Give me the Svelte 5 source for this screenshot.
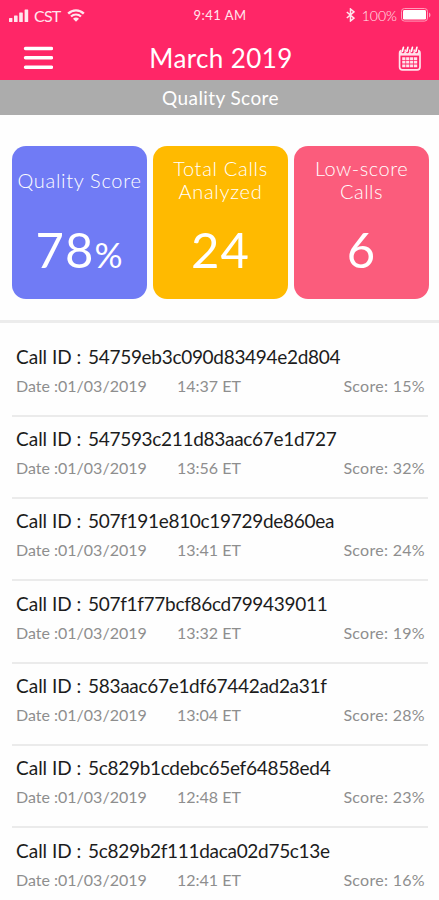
<script lang="ts">
	const month = 'March 2019';

	const cards = [
		{ label: 'Quality Score', value: '78', unit: '%', tone: 'blue' },
		{ label: 'Total Calls Analyzed', value: '24', unit: '', tone: 'amber' },
		{ label: 'Low-score Calls', value: '6', unit: '', tone: 'rose' }
	];

	const calls = [
		{ id: '54759eb3c090d83494e2d804', date: '01/03/2019', time: '14:37 ET', score: 15 },
		{ id: '547593c211d83aac67e1d727', date: '01/03/2019', time: '13:56 ET', score: 32 },
		{ id: '507f191e810c19729de860ea', date: '01/03/2019', time: '13:41 ET', score: 24 },
		{ id: '507f1f77bcf86cd799439011', date: '01/03/2019', time: '13:32 ET', score: 19 },
		{ id: '583aac67e1df67442ad2a31f', date: '01/03/2019', time: '13:04 ET', score: 28 },
		{ id: '5c829b1cdebc65ef64858ed4', date: '01/03/2019', time: '12:48 ET', score: 23 },
		{ id: '5c829b2f111daca02d75c13e', date: '01/03/2019', time: '12:41 ET', score: 16 }
	];
</script>

<div class="screen">
	<header class="header">
		<div class="status">
			<div class="status__left">
				<svg class="signal" width="20" height="13" viewBox="0 0 20 13" fill="currentColor">
					<rect x="0" y="9" width="3.4" height="4" rx="0.6" />
					<rect x="5" y="6.5" width="3.6" height="6.5" rx="0.6" />
					<rect x="10.2" y="3.5" width="3.6" height="9.5" rx="0.6" />
					<rect x="15.6" y="0.5" width="3.6" height="12.5" rx="0.6" />
				</svg>
				<span class="status__carrier">CST</span>
				<svg width="18" height="13" viewBox="0 0 18 13" fill="none" stroke="currentColor">
					<path d="M1.2 4.6a11 11 0 0 1 15.6 0" stroke-width="2.4" />
					<path d="M4 7.6a7 7 0 0 1 10 0" stroke-width="2.2" />
					<path d="M9 12.8 6 9.8a4.2 4.2 0 0 1 6 0z" fill="currentColor" stroke="none" />
				</svg>
			</div>
			<span class="status__time">9:41 AM</span>
			<div class="status__right">
				<svg width="9" height="14" viewBox="0 0 9 14" fill="none" stroke="currentColor" stroke-width="1.5">
					<path d="M0.8 4 8 10.2 4.5 13V1L8 3.8 0.8 10" />
				</svg>
				<span class="status__percent">100%</span>
				<svg width="30" height="14" viewBox="0 0 30 14">
					<rect x="0.5" y="0.5" width="26" height="12.6" rx="3" fill="none" stroke="#ff9dbb" />
					<rect x="2" y="2" width="23" height="9.6" rx="1.4" fill="#fff" />
					<path d="M28 4.4c2 1 2 4 0 5z" fill="#ff9dbb" />
				</svg>
			</div>
		</div>
		<div class="nav">
			<button class="nav__button" aria-label="Menu">
				<svg width="30" height="24" viewBox="0 0 30 24" stroke="#fff" stroke-width="3.4" stroke-linecap="round">
					<path d="M2.5 2.5h26M2.5 11.8h26M2.5 21.2h26" />
				</svg>
			</button>
			<h1 class="nav__title">{month}</h1>
			<button class="nav__button nav__button--calendar" aria-label="Calendar">
				<svg width="24" height="26" viewBox="0 0 24 26" fill="none" stroke="#ffe3eb">
					<rect x="1.6" y="4.4" width="20.4" height="19.4" rx="2.8" stroke-width="1.7" />
					<path d="M2 7.4h19.5" stroke-width="4.4" />
					<path d="M5 1.8v4M9.5 1.8v4M14 1.8v4M18.5 1.8v4" stroke="#ff2667" stroke-width="3" stroke-linecap="round" />
					<path d="M5.4 1.4 4.4 5.4M9.9 1.4 8.9 5.4M14.4 1.4 13.4 5.4M18.9 1.4 17.9 5.4" stroke="#fff" stroke-width="1.7" stroke-linecap="round" />
					<path d="M4.2 12.6h15M4.2 16.2h15M4.2 19.8h15" stroke-width="2.8" stroke-dasharray="3.2 0.73" />
				</svg>
			</button>
		</div>
	</header>

	<h2 class="subheader">Quality Score</h2>

	<section class="cards">
		{#each cards as card}
			<div class="card card--{card.tone}">
				<div class="card__label">{card.label}</div>
				<div class="card__value">
					{card.value}{#if card.unit}<span class="card__unit">{card.unit}</span>{/if}
				</div>
			</div>
		{/each}
	</section>

	<ul class="calls">
		{#each calls as call}
			<li class="call">
				<div class="call__id"><span class="call__prefix">Call ID :</span><span class="call__hash">{call.id}</span></div>
				<div class="call__meta">
					<span class="call__date">Date :{call.date}</span>
					<span class="call__time">{call.time}</span>
					<span class="call__score">Score: {call.score}%</span>
				</div>
			</li>
		{/each}
	</ul>
</div>

<style>
	:global(body) {
		margin: 0;
		background: #fff;
	}

	.screen {
		height: 900px;
		overflow: hidden;
		font-family: Lato, 'Open Sans', sans-serif;
		background: #fefefe;
	}

	.header {
		height: 80px;
		color: #ffe6ed;
		background: #ff2667;
	}

	.status {
		display: grid;
		grid-template-columns: 1fr auto 1fr;
		align-items: center;
		height: 30px;
		padding: 0 8px 0 9px;
	}

	.status__left,
	.status__right {
		display: flex;
		align-items: center;
	}

	.status__right {
		justify-content: flex-end;
	}

	.status__carrier {
		width: 27px;
		margin: 0 6px 0 5px;
		font-size: 16px;
		letter-spacing: -0.8px;
	}

	.status__time {
		font-size: 13px;
		letter-spacing: 0.5px;
	}

	.status__percent {
		margin: 0 4px 0 7px;
		font-size: 14px;
		font-weight: 300;
	}

	.nav {
		display: flex;
		align-items: center;
		justify-content: space-between;
		height: 50px;
		padding: 0 17px 0 23px;
	}

	.nav__button {
		display: flex;
		padding: 6px 0 0;
		border: 0;
		background: none;
	}

	.nav__button--calendar {
		padding-top: 8px;
	}

	.nav__title {
		margin: 6px 9px 0 0;
		font-size: 26px;
		font-weight: 400;
		letter-spacing: 0.4px;
		color: #fff;
	}

	.subheader {
		height: 35px;
		margin: 0;
		font-size: 19px;
		font-weight: 400;
		line-height: 36px;
		letter-spacing: 0.4px;
		text-align: center;
		text-indent: 2px;
		color: #fff;
		background: #acacac;
	}

	.cards {
		display: grid;
		grid-template-columns: repeat(3, 1fr);
		gap: 6px;
		height: 205px;
		box-sizing: border-box;
		padding: 31px 10px 21px 12px;
	}

	.card {
		display: flex;
		flex-direction: column;
		box-sizing: border-box;
		padding-top: 11px;
		border-radius: 14px;
		text-align: center;
		color: #fff;
	}

	.card--blue {
		background: #707bf5;
	}

	.card--amber {
		background: #ffba00;
	}

	.card--rose {
		background: #fb5c7c;
	}

	.card__label {
		display: flex;
		align-items: center;
		justify-content: center;
		align-self: center;
		width: 130px;
		height: 46px;
		box-sizing: border-box;
		font-size: 20px;
		font-weight: 300;
		line-height: 23px;
		letter-spacing: 0.7px;
	}

	.card--rose .card__label {
		width: 110px;
		letter-spacing: 0.5px;
	}

	.card__value {
		margin-top: 16px;
		font-size: 49px;
		line-height: 60px;
		letter-spacing: 1px;
	}

	.card__unit {
		font-size: 35px;
	}

	.calls {
		margin: 0;
		padding: 0 11px 0 12px;
		list-style: none;
		border-top: 3px solid #ececec;
	}

	.call {
		box-sizing: border-box;
		height: 82.35px;
		padding: 9.5px 3px 0 4px;
		border-bottom: 2px solid #ebebeb;
	}

	.call:first-child {
		height: 93.5px;
		padding-top: 21px;
	}

	.call__id {
		display: flex;
		font-size: 19px;
		line-height: 26px;
		color: #1c1c1c;
	}

	.call__prefix {
		width: 72px;
	}

	.call__hash {
		letter-spacing: -0.3px;
	}

	.call__meta {
		display: flex;
		margin-top: 4px;
		font-size: 16px;
		line-height: 24px;
		color: #8e8e8e;
	}

	.call__date {
		width: 161px;
	}

	.call__score {
		margin-left: auto;
		letter-spacing: 0.3px;
	}
</style>
